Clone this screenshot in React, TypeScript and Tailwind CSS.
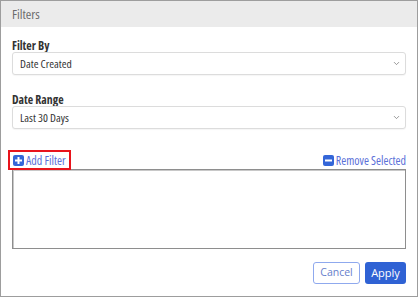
import React from 'react';
import { ChevronDown } from 'lucide-react';

function SquareIcon({ minus }: { minus?: boolean }) {
  return (
    <svg width="11" height="11" viewBox="0 0 11 11" className="shrink-0">
      <rect x="0" y="0" width="11" height="11" rx="2" fill="#3466d8" />
      <rect x="2" y="4.5" width="7" height="2" fill="#fff" />
      {!minus && <rect x="4.5" y="2" width="2" height="7" fill="#fff" />}
    </svg>
  );
}

function Select({ value }: { value: string }) {
  return (
    <div className="flex h-[23px] items-center justify-between rounded-[3px] border border-[#dcdcdc] bg-white pl-[7px] pr-[4px] shadow-[0_1px_1px_rgba(0,0,0,0.04)]">
      <span className="text-[11.6px] leading-[14px] text-[#333]">{value}</span>
      <ChevronDown size={9} strokeWidth={2} className="text-[#777]" />
    </div>
  );
}

export default function App() {
  return (
    <div className="h-[297px] w-[420px] bg-white font-['Open_Sans',sans-serif] font-stretch-semi-condensed">
      <div className="flex h-[297px] w-[418px] flex-col border border-[#9d9d9d] bg-white">
        <div className="flex h-[26px] items-center bg-[#ebebeb] pl-[11px]">
          <span className="text-[13.3px] leading-[16px] text-[#6b6b6b]">Filters</span>
        </div>

        <div className="flex flex-1 flex-col px-[11px]">
          <label className="mt-[12px] text-[11.8px] font-bold leading-[13px] text-[#333]">Filter By</label>
          <Select value="Date Created" />

          <label className="mt-[18px] text-[11.8px] font-bold leading-[13px] text-[#333]">Date Range</label>
          <Select value="Last 30 Days" />

          <div className="mt-[24px] flex h-[15px] items-center justify-between">
            <div className="relative flex items-center gap-[2px] pl-[1px]">
              <SquareIcon />
              <span className="text-[12px] leading-[15px] text-[#5a6fd8]">Add Filter</span>
              <div className="absolute left-[-4px] top-[-3px] h-[20px] w-[63px] border-2 border-[#e8141c]" />
            </div>
            <div className="flex items-center gap-[2px]">
              <SquareIcon minus />
              <span className="text-[12px] leading-[15px] text-[#5a6fd8]">Remove Selected</span>
            </div>
          </div>

          <div className="mt-[1px] h-[80px] border border-[#8e8e8e] shadow-[inset_1px_1px_0_#c8c8c8]" />

          <div className="mt-[13px] flex justify-end gap-[5px] font-stretch-normal">
            <button className="h-[22px] w-[47px] rounded-[3px] border border-[#8fa9ee] bg-white text-[10.5px] text-[#6680cc]">
              Cancel
            </button>
            <button className="h-[22px] w-[41px] rounded-[3px] bg-[#2f62d4] text-[11px] text-white">
              Apply
            </button>
          </div>
        </div>
      </div>
    </div>
  );
}
